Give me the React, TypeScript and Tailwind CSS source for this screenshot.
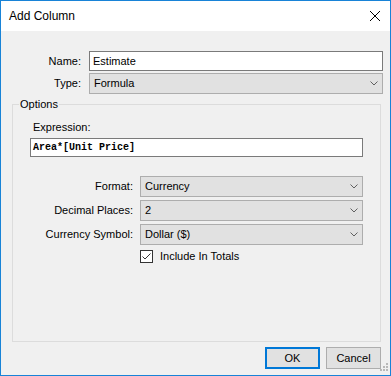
import React from "react";

const FONT = { fontFamily: '"Liberation Sans", Arial, sans-serif' };

function Chevron() {
  return (
    <svg width="8" height="5" viewBox="0 0 8 5" className="shrink-0">
      <path d="M0.5 0.5 L4 4 L7.5 0.5" fill="none" stroke="#606060" strokeWidth="1" />
    </svg>
  );
}

function Select({ value }: { value: string }) {
  return (
    <div className="h-[21px] flex items-center justify-between bg-[#e1e1e1] border border-[#adadad] pl-[4px] pr-[4px]">
      <span>{value}</span>
      <Chevron />
    </div>
  );
}

const OPTION_ROWS = [
  { label: "Format:", value: "Currency" },
  { label: "Decimal Places:", value: "2" },
  { label: "Currency Symbol:", value: "Dollar ($)" },
];

export default function App() {
  return (
    <div
      className="relative w-[391px] h-[376px] border border-[#1883d7] bg-[#f0f0f0] flex flex-col text-[11px] leading-[13px] text-black"
      style={FONT}
    >
      {/* title bar */}
      <div className="h-[30px] bg-white flex items-center justify-between pl-[8px] pr-[10px] shrink-0">
        <span className="text-[12px]">Add Column</span>
        <svg width="10" height="10" viewBox="0 0 10 10">
          <path d="M0 0 L10 10 M10 0 L0 10" stroke="#000" strokeWidth="1" />
        </svg>
      </div>

      {/* name / type */}
      <div className="grid grid-cols-[80px_294px] gap-x-[8px] gap-y-[2px] pt-[20px] items-center">
        <label className="text-right">Name:</label>
        <div className="h-[20px] bg-white border border-[#7a7a7a] flex items-center pl-[3px]">Estimate</div>
        <label className="text-right">Type:</label>
        <Select value="Formula" />
      </div>

      <fieldset className="flex-1 mt-[4px] ml-[11px] mr-[9px] border border-[#dcdcdc] min-w-0">
        <legend className="ml-[6px] px-[1px] h-[13px]">Options</legend>
        <div className="px-[17px]">
          <div className="pt-[10px] pl-[3px]">Expression:</div>
          <div
            className="mt-[4px] h-[19px] bg-white border border-[#7a7a7a] flex items-center pl-[2px] text-[10px] font-bold"
            style={{ fontFamily: '"Liberation Mono", "Courier New", monospace' }}
          >
            Area*[Unit Price]
          </div>

          <div className="mt-[19px] grid grid-cols-[103px_223px] gap-x-[7px] gap-y-[3px] items-center">
            {OPTION_ROWS.map((row) => (
              <React.Fragment key={row.label}>
                <label className="text-right whitespace-nowrap">{row.label}</label>
                <Select value={row.value} />
              </React.Fragment>
            ))}
            <div />
            <div className="flex items-center gap-[7px] mt-[2px]">
              <span className="w-[13px] h-[13px] border border-[#333] bg-white flex items-center justify-center">
                <svg width="11" height="11" viewBox="0 0 11 11">
                  <path d="M1.5 5.5 L4 8 L9.5 2.5" fill="none" stroke="#333" strokeWidth="1" />
                </svg>
              </span>
              <span>Include In Totals</span>
            </div>
          </div>
        </div>
      </fieldset>

      {/* buttons */}
      <div className="flex justify-end gap-[6px] mt-[5px] mb-[6px] mr-[9px] shrink-0">
        <button className="w-[55px] h-[22px] bg-[#e1e1e1] border-2 border-[#0078d7]">OK</button>
        <button className="w-[55px] h-[22px] bg-[#e1e1e1] border border-[#adadad]">Cancel</button>
      </div>

      {/* resize grip */}
      <svg className="absolute right-[1px] bottom-[1px]" width="12" height="12" viewBox="0 0 12 12">
        <g fill="#b8b8b8">
          <rect x="9" y="1" width="2" height="2" />
          <rect x="6" y="4" width="2" height="2" />
          <rect x="9" y="4" width="2" height="2" />
          <rect x="3" y="7" width="2" height="2" />
          <rect x="6" y="7" width="2" height="2" />
          <rect x="9" y="7" width="2" height="2" />
        </g>
      </svg>
    </div>
  );
}
